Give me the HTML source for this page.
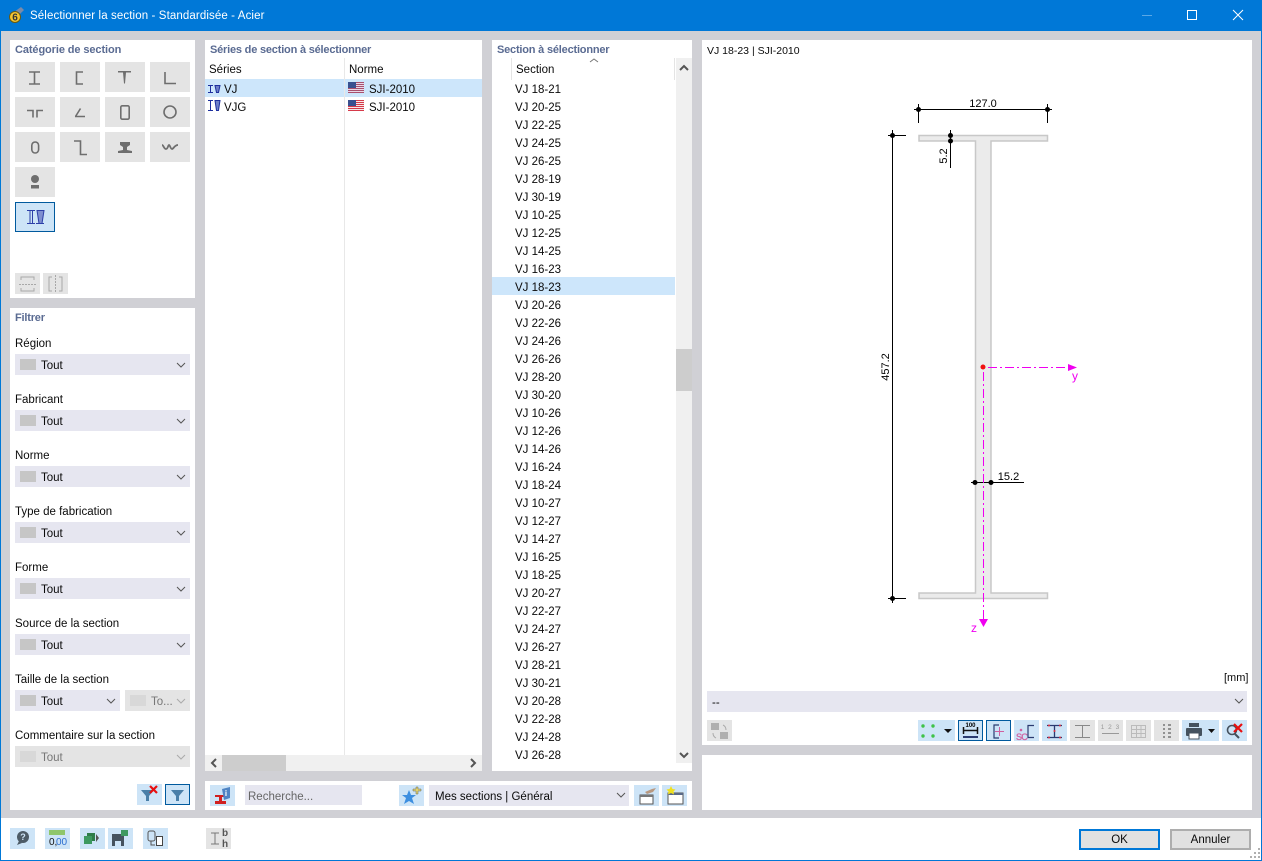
<!DOCTYPE html>
<html lang="fr"><head><meta charset="utf-8"><title>Sélectionner la section</title>
<style>
html,body{margin:0;padding:0;width:1262px;height:861px;overflow:hidden;background:#d0d0d5}
body{position:relative;font-family:"Liberation Sans",sans-serif;font-size:11.5px;color:#0a0a0a}
.a,.t,.h,.s{position:absolute}
.a{display:block}
.t{white-space:nowrap;line-height:14px;margin-top:1px}
.h{white-space:nowrap;line-height:14px;font-weight:bold;font-size:11px;color:#5a6b92;margin-top:1px;letter-spacing:-.2px}
.w{position:absolute;background:#fff}
.s{background:#e6e6f0;height:21px}
.s i{position:absolute;left:5px;top:5px;width:16px;height:11px;background:#c6c6c6}
.s b{position:absolute;left:26px;top:5px;font-weight:normal;line-height:14px}
.s.d{background:#e4e4e4;color:#777}
.r{position:absolute;left:515px;white-space:nowrap;line-height:14px;margin-top:1px}
#svg{position:absolute;left:0;top:0}
</style></head><body>
<div class="a" style="left:0;top:0;width:1262px;height:31px;background:#0078d7"></div>
<div class="a" style="left:0;top:0;width:1px;height:861px;background:#0078d7"></div>
<div class="a" style="right:0;top:0;width:1px;height:861px;background:#0078d7"></div>
<div class="a" style="left:0;bottom:0;width:1262px;height:1px;background:#0078d7"></div>
<div class="a" style="left:1px;top:818px;width:1260px;height:42px;background:#fff"></div>
<div class="t" style="left:30px;top:8px;color:#fff;letter-spacing:.11px">Sélectionner la section - Standardisée - Acier</div>

<div class="w" style="left:10px;top:40px;width:185px;height:258px"></div>
<div class="w" style="left:10px;top:308px;width:185px;height:502px"></div>
<div class="w" style="left:205px;top:40px;width:277px;height:731px"></div>
<div class="w" style="left:492px;top:40px;width:200px;height:731px"></div>
<div class="w" style="left:702px;top:40px;width:550px;height:705px"></div>
<div class="w" style="left:702px;top:755px;width:550px;height:55px"></div>
<div class="w" style="left:205px;top:781px;width:487px;height:29px"></div>

<div class="h" style="left:15px;top:42px;letter-spacing:-.1px">Catégorie de section</div>
<div class="h" style="left:15px;top:310px">Filtrer</div>
<div class="h" style="left:210px;top:42px">Séries de section à sélectionner</div>
<div class="h" style="left:497px;top:42px">Section à sélectionner</div>
<div class="t" style="left:707px;top:43px;font-size:10.5px">VJ 18-23 | SJI-2010</div>

<div class="a" style="left:205px;top:79px;width:277px;height:18px;background:#cde6fb"></div>
<div class="a" style="left:492px;top:277px;width:183px;height:18px;background:#cde6fb"></div>
<div class="a" style="left:344px;top:58px;width:1px;height:697px;background:#e8e8e8"></div>
<div class="a" style="left:511px;top:58px;width:1px;height:22px;background:#e4e4e4"></div>
<div class="a" style="left:674px;top:58px;width:1px;height:22px;background:#e4e4e4"></div>
<div class="t" style="left:209px;top:62px">Séries</div>
<div class="t" style="left:349px;top:62px">Norme</div>
<div class="t" style="left:224px;top:82px">VJ</div>
<div class="t" style="left:224px;top:100px">VJG</div>
<div class="t" style="left:369px;top:82px">SJI-2010</div>
<div class="t" style="left:369px;top:100px">SJI-2010</div>
<div class="t" style="left:516px;top:62px">Section</div>

<div class="a" style="left:205px;top:755px;width:277px;height:16px;background:#f0f0f0"></div>
<div class="a" style="left:222px;top:755px;width:64px;height:16px;background:#cdcdcd"></div>
<div class="a" style="left:676px;top:58px;width:16px;height:705px;background:#f0f0f0"></div>
<div class="a" style="left:676px;top:349px;width:16px;height:42px;background:#cdcdcd"></div>

<div class="r" style="top:82px">VJ 18-21</div>
<div class="r" style="top:100px">VJ 20-25</div>
<div class="r" style="top:118px">VJ 22-25</div>
<div class="r" style="top:136px">VJ 24-25</div>
<div class="r" style="top:154px">VJ 26-25</div>
<div class="r" style="top:172px">VJ 28-19</div>
<div class="r" style="top:190px">VJ 30-19</div>
<div class="r" style="top:208px">VJ 10-25</div>
<div class="r" style="top:226px">VJ 12-25</div>
<div class="r" style="top:244px">VJ 14-25</div>
<div class="r" style="top:262px">VJ 16-23</div>
<div class="r" style="top:280px">VJ 18-23</div>
<div class="r" style="top:298px">VJ 20-26</div>
<div class="r" style="top:316px">VJ 22-26</div>
<div class="r" style="top:334px">VJ 24-26</div>
<div class="r" style="top:352px">VJ 26-26</div>
<div class="r" style="top:370px">VJ 28-20</div>
<div class="r" style="top:388px">VJ 30-20</div>
<div class="r" style="top:406px">VJ 10-26</div>
<div class="r" style="top:424px">VJ 12-26</div>
<div class="r" style="top:442px">VJ 14-26</div>
<div class="r" style="top:460px">VJ 16-24</div>
<div class="r" style="top:478px">VJ 18-24</div>
<div class="r" style="top:496px">VJ 10-27</div>
<div class="r" style="top:514px">VJ 12-27</div>
<div class="r" style="top:532px">VJ 14-27</div>
<div class="r" style="top:550px">VJ 16-25</div>
<div class="r" style="top:568px">VJ 18-25</div>
<div class="r" style="top:586px">VJ 20-27</div>
<div class="r" style="top:604px">VJ 22-27</div>
<div class="r" style="top:622px">VJ 24-27</div>
<div class="r" style="top:640px">VJ 26-27</div>
<div class="r" style="top:658px">VJ 28-21</div>
<div class="r" style="top:676px">VJ 30-21</div>
<div class="r" style="top:694px">VJ 20-28</div>
<div class="r" style="top:712px">VJ 22-28</div>
<div class="r" style="top:730px">VJ 24-28</div>
<div class="r" style="top:748px">VJ 26-28</div>

<div class="t" style="left:15px;top:336px">Région</div>
<div class="s" style="left:15px;top:354px;width:175px"><i></i><b>Tout</b></div>
<div class="t" style="left:15px;top:392px">Fabricant</div>
<div class="s" style="left:15px;top:410px;width:175px"><i></i><b>Tout</b></div>
<div class="t" style="left:15px;top:448px">Norme</div>
<div class="s" style="left:15px;top:466px;width:175px"><i></i><b>Tout</b></div>
<div class="t" style="left:15px;top:504px">Type de fabrication</div>
<div class="s" style="left:15px;top:522px;width:175px"><i></i><b>Tout</b></div>
<div class="t" style="left:15px;top:560px">Forme</div>
<div class="s" style="left:15px;top:578px;width:175px"><i></i><b>Tout</b></div>
<div class="t" style="left:15px;top:616px">Source de la section</div>
<div class="s" style="left:15px;top:634px;width:175px"><i></i><b>Tout</b></div>
<div class="t" style="left:15px;top:672px">Taille de la section</div>
<div class="s" style="left:15px;top:690px;width:105px"><i></i><b>Tout</b></div>
<div class="s d" style="left:125px;top:690px;width:65px"><i style="background:#d8d8d8"></i><b>To...</b></div>
<div class="t" style="left:15px;top:728px">Commentaire sur la section</div>
<div class="s d" style="left:15px;top:746px;width:175px"><i style="background:#d8d8d8"></i><b>Tout</b></div>

<div class="s" style="left:245px;top:785px;width:117px;height:20px;color:#666"><b style="left:3px;top:5px">Recherche...</b></div>
<div class="s" style="left:429px;top:785px;width:200px"><b style="left:6px;top:5px">Mes sections | Général</b></div>
<div class="s" style="left:707px;top:691px;width:540px"><b style="left:5px;top:5px">--</b></div>
<div class="t" style="left:1224px;top:670px;font-size:11px">[mm]</div>

<div class="a" style="left:1079px;top:829px;width:77px;height:17px;border:2px solid #0078d7;background:#e1e1e1;text-align:center;line-height:19px">OK</div>
<div class="a" style="left:1170px;top:829px;width:77px;height:17px;border:2px solid #adadad;background:#e1e1e1;text-align:center;line-height:19px">Annuler</div>

<svg id="svg" width="1262" height="861" viewBox="0 0 1262 861" xmlns="http://www.w3.org/2000/svg" font-family="Liberation Sans, sans-serif" font-size="11">
<!-- title bar -->
<path d="M14 12l7-5 3 3-5 5z" fill="#7a8aa8"/>
<circle cx="15" cy="17" r="5.500" fill="#f4c430" stroke="#6a5a10"/>
<text x="15" y="20.500" font-size="10" font-weight="bold" text-anchor="middle" fill="#333">6</text>
<path d="M1142 15.500h10" stroke="#5aa8e6"/>
<rect x="1187.500" y="10.500" width="9" height="9" fill="none" stroke="#fff"/>
<path d="M1233 10l10 10M1243 10l-10 10" stroke="#fff" fill="none"/>

<!-- category buttons -->
<g fill="#e4e4e4">
<rect x="15" y="62" width="40" height="30"/><rect x="60" y="62" width="40" height="30"/><rect x="105" y="62" width="40" height="30"/><rect x="150" y="62" width="40" height="30"/>
<rect x="15" y="97" width="40" height="30"/><rect x="60" y="97" width="40" height="30"/><rect x="105" y="97" width="40" height="30"/><rect x="150" y="97" width="40" height="30"/>
<rect x="15" y="132" width="40" height="30"/><rect x="60" y="132" width="40" height="30"/><rect x="105" y="132" width="40" height="30"/><rect x="150" y="132" width="40" height="30"/>
<rect x="15" y="167" width="40" height="30"/>
<rect x="15" y="273" width="25" height="21"/><rect x="43" y="273" width="25" height="21"/>
</g>
<rect x="15.500" y="202.500" width="39" height="29" fill="#cde4f7" stroke="#005a9e"/>
<g fill="none" stroke="#6e6e6e" stroke-width="1.600">
<path d="M29 72h11M29 84h11M34.500 72v12"/>
<path d="M83 72h-6.500v12H83"/>
<path d="M165 72v11.500H176"/>
<path d="M27 110.500h6v7M43 110.500h-6v7"/>
<path d="M75 116.500h10M75.500 116.500l5-8"/>
<rect x="120.800" y="105.800" width="8.400" height="13.400" rx="1.500"/>
<circle cx="170" cy="112" r="6"/>
<rect x="31.800" y="142" width="6.800" height="11" rx="3.400"/>
<path d="M74 141h6.500v13.500H87"/>
<path d="M162 145c1.500 0 2 4 4 4s2-4 3-4 1.500 4 3 4 2.500-4 6-4" stroke-width="1.800"/>
</g>
<path d="M118 71h13v1.500h-5l-1 11h-1l-1-11h-5z" fill="#6e6e6e"/>
<path d="M120 142h10v3l-3 2v3l5 1v2h-14v-2l5-1v-3l-3-2z" fill="#6e6e6e"/>
<circle cx="35" cy="179" r="4" fill="#6e6e6e"/><rect x="31" y="185" width="8" height="3.500" fill="#6e6e6e"/>
<g stroke="#2c3fa8" fill="none">
<path d="M27 210.500h8M27 223.500h8M30 211v12M32.500 211v12"/>
<path d="M37 210.500h7l-2 13h-3z" fill="#7f8fd0"/>
<path d="M36 223.500h8"/>
</g>
<g fill="none" stroke="#a8a8a8">
<path d="M21 280v-3h13v3M21 288v3h13v-3"/><path d="M19 284.500h17" stroke-dasharray="2 1"/>
<path d="M52 277h-3v14h3M59 277h3v14h-3"/><path d="M55.500 275v18" stroke-dasharray="2 1"/>
</g>

<!-- chevrons -->
<g fill="none" stroke="#555" stroke-width="1">
<path d="M177 363l4 4 4-4M177 419l4 4 4-4M177 475l4 4 4-4M177 531l4 4 4-4M177 587l4 4 4-4M177 643l4 4 4-4M107 699l4 4 4-4"/>
<path d="M617 793l4 4 4-4M1235 699l4 4 4-4"/>
</g>
<path d="M177 699l4 4 4-4M177 755l4 4 4-4" fill="none" stroke="#aaa"/>
<path d="M590 62l4-3 4 3" fill="none" stroke="#777"/>
<g fill="none" stroke="#555" stroke-width="2">
<path d="M680 70l4-4 4 4M680 753l4 4 4-4M216 759l-4 4 4 4M471 759l4 4-4 4"/>
</g>

<!-- list icons -->
<g stroke="#1d2f9e" fill="none">
<path d="M208 85.500h5M208 92.500h5M210.500 86v6"/><path d="M215 85.500h5l-1.500 7h-2z" fill="#6f80c8"/>
<path d="M208 100.500h5M208 110.500h5M210.500 101v9"/><path d="M215 100.500h5l-1.500 10h-2z" fill="#6f80c8"/>
</g>
<g>
<rect x="348" y="82" width="16" height="11" fill="#e8d8e8"/>
<path d="M348 82.500h16M348 84.500h16M348 86.500h16M348 88.500h16M348 90.500h16M348 92.500h16" stroke="#a8506e" stroke-width="1"/>
<rect x="348" y="82" width="8" height="6" fill="#39508f"/>
<rect x="348" y="100" width="16" height="11" fill="#f6e8e8"/>
<path d="M348 100.500h16M348 102.500h16M348 104.500h16M348 106.500h16M348 108.500h16M348 110.500h16" stroke="#d63a4a" stroke-width="1"/>
<rect x="348" y="100" width="8" height="6" fill="#39508f"/>
</g>

<!-- filter buttons -->
<rect x="137" y="784" width="25" height="21" fill="#cde4f7"/>
<path d="M141 790h13l-5 6v5h-3v-5z" fill="#4a7fa8"/>
<path d="M150 786l7 7M157 786l-7 7" stroke="#e81010" stroke-width="2.200"/>
<rect x="165.500" y="784.500" width="24" height="20" fill="#cde4f7" stroke="#005a9e"/>
<path d="M171 790h13l-5 6v5h-3v-5z" fill="#4a7fa8"/>

<!-- bottom-left toolbar -->
<g fill="#cde4f7">
<rect x="10" y="828" width="25" height="21"/><rect x="45" y="828" width="25" height="21"/><rect x="80" y="828" width="25" height="21"/><rect x="108" y="828" width="25" height="21"/><rect x="143" y="828" width="25" height="21"/>
</g>
<rect x="206" y="828" width="25" height="21" fill="#e4e4e4"/>
<circle cx="23" cy="837" r="6" fill="#4d5b66"/><path d="M19 841l-2 4 5-2z" fill="#4d5b66"/>
<text x="23" y="840" font-size="9" font-weight="bold" fill="#cde4f7" text-anchor="middle">?</text>
<rect x="49" y="830" width="16" height="5" fill="#8fc66b"/>
<text x="49" y="845" font-size="10" fill="#111">0,</text><text x="56" y="845" font-size="10" fill="#2d6fd0">00</text>
<path d="M87 833h8v8h-8z" fill="#2f7d4a"/><path d="M84 836h8v8h-8z" fill="#3d9960"/><path d="M96 834l3 4-3 4z" fill="#555"/>
<path d="M112 834h12v12h-12z" fill="#45525e"/><rect x="115" y="841" width="6" height="5" fill="#cde4f7"/><path d="M121 830h7v6h-7z" fill="#3d9960"/>
<rect x="148" y="831" width="7" height="10" rx="2" fill="none" stroke="#555"/><path d="M151 841v4h4" fill="none" stroke="#555"/><rect x="156.500" y="836.500" width="6" height="9" fill="#fff" stroke="#444"/>
<path d="M211 833h8M211 844h8M215 833v11" stroke="#777" fill="none"/>
<text x="222" y="836" font-size="10" font-weight="bold" fill="#555">b</text><text x="222" y="847" font-size="10" font-weight="bold" fill="#555">h</text>

<!-- search bar icons -->
<g fill="#cde4f7">
<rect x="210" y="785" width="25" height="21"/><rect x="399" y="785" width="25" height="21"/><rect x="634" y="785" width="25" height="21"/><rect x="662" y="785" width="25" height="21"/>
</g>
<path d="M215 795h10v2h-3v4h4v3h-11v-3h4v-4h-4z" fill="#d02020"/>
<path d="M222 789l8-2v11l-6 2z" fill="#4f84c4"/>
<text x="226" y="796" font-size="8" font-weight="bold" fill="#fff" text-anchor="middle">i</text>
<path d="M409 790l2 5h5l-4 3 2 6-5-3-5 3 2-6-4-3h5z" fill="#3d8fe0"/>
<path d="M413 789h3v-2h2v2h3v2h-3v3h-2v-3h-3z" fill="#e0d070" stroke="#665" stroke-width=".5"/>
<rect x="640" y="795" width="13" height="9" fill="#fff" stroke="#555"/><path d="M640 795h13v2h-13z" fill="#777"/>
<path d="M645 792l7-3 4-1-3 4-6 2z" fill="#b89880"/>
<rect x="668" y="793" width="15" height="11" fill="#fff" stroke="#555"/><path d="M668 793h15v2h-15z" fill="#5a6a88"/>
<path d="M671 786l1.500 3 3 .5-2 2 .5 3-3-1.500-3 1.500.5-3-2-2 3-.5z" fill="#f0e020"/>

<!-- preview toolbar -->
<rect x="707" y="720" width="25" height="21" fill="#e4e4e4"/>
<rect x="711" y="723" width="8" height="7" fill="#b0b0b0"/><rect x="720" y="732" width="8" height="7" fill="#b0b0b0"/>
<path d="M723 725c2 1 3 3 3 5M716 738c-2-1-3-3-3-5" fill="none" stroke="#aaa"/>
<rect x="918" y="720" width="37" height="21" fill="#cde4f7"/>
<g fill="#3fc24a"><circle cx="923" cy="726" r="1.700"/><circle cx="933" cy="726" r="1.700"/><circle cx="923" cy="736" r="1.700"/><circle cx="933" cy="736" r="1.700"/></g>
<path d="M944 729h8l-4 4z" fill="#111"/>
<rect x="958.500" y="720.500" width="24" height="20" fill="#cde4f7" stroke="#005a9e"/>
<path d="M963 730.500h15M963.500 727v7M977.500 727v7" stroke="#111" stroke-width="1.500" fill="none"/>
<text x="970.500" y="727" font-size="6" font-weight="bold" text-anchor="middle">100</text>
<rect x="963" y="736" width="15" height="2" fill="#2a3b70"/>
<rect x="986.500" y="720.500" width="24" height="20" fill="#cde4f7" stroke="#005a9e"/>
<path d="M999 725h-5v13h5" fill="none" stroke="#2a3b70" stroke-width="1.200"/>
<path d="M995 731.500h9M999.500 727v9" stroke="#d060a0" fill="none"/>
<rect x="1014" y="720" width="25" height="21" fill="#cde4f7"/>
<text x="1016" y="740" font-size="9" fill="#d060a0" stroke="#d060a0" stroke-width=".3" letter-spacing="-.8">SC</text>
<circle cx="1021" cy="730" r="1.300" fill="#d060a0"/>
<path d="M1034 725.500h-6v12h6" fill="none" stroke="#2a3b70" stroke-width="1.200"/>
<rect x="1042" y="720" width="25" height="21" fill="#cde4f7"/>
<path d="M1047 725.500h15M1047 737.500h15M1054.500 726v11" stroke="#2a3b70" stroke-width="1.300" fill="none"/>
<g fill="#e03040"><circle cx="1049" cy="725.500" r="1"/><circle cx="1060" cy="725.500" r="1"/><circle cx="1049" cy="737.500" r="1"/><circle cx="1060" cy="737.500" r="1"/><circle cx="1054.500" cy="731" r="1"/></g>
<g fill="#e4e4e4">
<rect x="1070" y="720" width="25" height="21"/><rect x="1098" y="720" width="25" height="21"/><rect x="1126" y="720" width="25" height="21"/><rect x="1154" y="720" width="25" height="21"/>
</g>
<path d="M1075 725.500h15M1075 737.500h15M1082.500 726v11" stroke="#888" fill="none"/>
<text x="1110.500" y="729" font-size="6.500" fill="#999" text-anchor="middle" letter-spacing="1">1 2 3</text>
<path d="M1102 733.500h17" stroke="#999"/>
<path d="M1131.500 725.500h14v12h-14zM1136.500 725.500v12M1141 725.500v12M1131.500 729.500h14M1131.500 733.500h14" fill="none" stroke="#bbb"/>
<path d="M1163 725h2M1168 725h3M1163 729h2M1168 729h3M1163 733h2M1168 733h3M1163 737h2M1168 737h3" stroke="#777" stroke-width="1.500"/>
<rect x="1182" y="720" width="37" height="21" fill="#cde4f7"/>
<rect x="1186" y="728" width="16" height="8" rx="1" fill="#45525e"/><rect x="1189" y="723" width="10" height="4" fill="#45525e"/><rect x="1189" y="733" width="10" height="6" fill="#fff" stroke="#45525e"/>
<path d="M1208 729h7l-3.500 4z" fill="#111"/>
<rect x="1222" y="720" width="25" height="21" fill="#cde4f7"/>
<circle cx="1232" cy="730" r="4.500" fill="none" stroke="#45525e" stroke-width="1.600"/><path d="M1235 734l4 4" stroke="#45525e" stroke-width="2"/>
<path d="M1234 724l8 8M1242 724l-8 8" stroke="#e81010" stroke-width="2.200"/>

<!-- section drawing -->
<path d="M919 135.500h128.500v5.500h-56.500v452h56.500v5.500h-128.500v-5.500h56.500v-452h-56.500z" fill="#ebebeb" stroke="#c8c8c8" stroke-width="1.500"/>
<g stroke="#000" fill="none">
<path d="M914 109.500h138M918.500 104v19M1047.500 104v19"/>
<path d="M888 135.500h18M888 598.500h18M892.500 130v473"/>
<path d="M950.500 130v38"/>
<path d="M971 482.500h53"/>
</g>
<g fill="#000">
<circle cx="918.500" cy="109.500" r="2.500"/><circle cx="1047.500" cy="109.500" r="2.500"/>
<circle cx="892.500" cy="135.500" r="2.500"/><circle cx="892.500" cy="598.500" r="2.500"/>
<circle cx="950.500" cy="135.500" r="2.500"/><circle cx="950.500" cy="141" r="2.500"/>
<circle cx="975" cy="482.500" r="2.500"/><circle cx="991" cy="482.500" r="2.500"/>
</g>
<g fill="#000" font-size="11">
<text x="983" y="107" text-anchor="middle">127.0</text>
<text x="1008.500" y="480" text-anchor="middle">15.2</text>
<text transform="translate(947 156) rotate(-90)" text-anchor="middle">5.2</text>
<text transform="translate(889 367) rotate(-90)" text-anchor="middle">457.2</text>
</g>
<path d="M988 367.500h81M983.500 372v248" fill="none" stroke="#f000f0" stroke-dasharray="9 3 2 3"/>
<path d="M1068 364l9 3.500-9 3.500z" fill="#f000f0"/>
<path d="M979 619h9l-4.500 8z" fill="#f000f0"/>
<circle cx="983" cy="367" r="2.500" fill="#f01010"/>
<text x="1072" y="380" font-size="12" fill="#f000f0">y</text>
<text x="971" y="632" font-size="12" fill="#f000f0">z</text>

<!-- gripper -->
<g fill="#b0b0b0"><rect x="1258" y="848" width="2" height="2"/><rect x="1258" y="852" width="2" height="2"/><rect x="1254" y="852" width="2" height="2"/><rect x="1258" y="856" width="2" height="2"/><rect x="1254" y="856" width="2" height="2"/><rect x="1250" y="856" width="2" height="2"/></g>
</svg>
</body></html>
